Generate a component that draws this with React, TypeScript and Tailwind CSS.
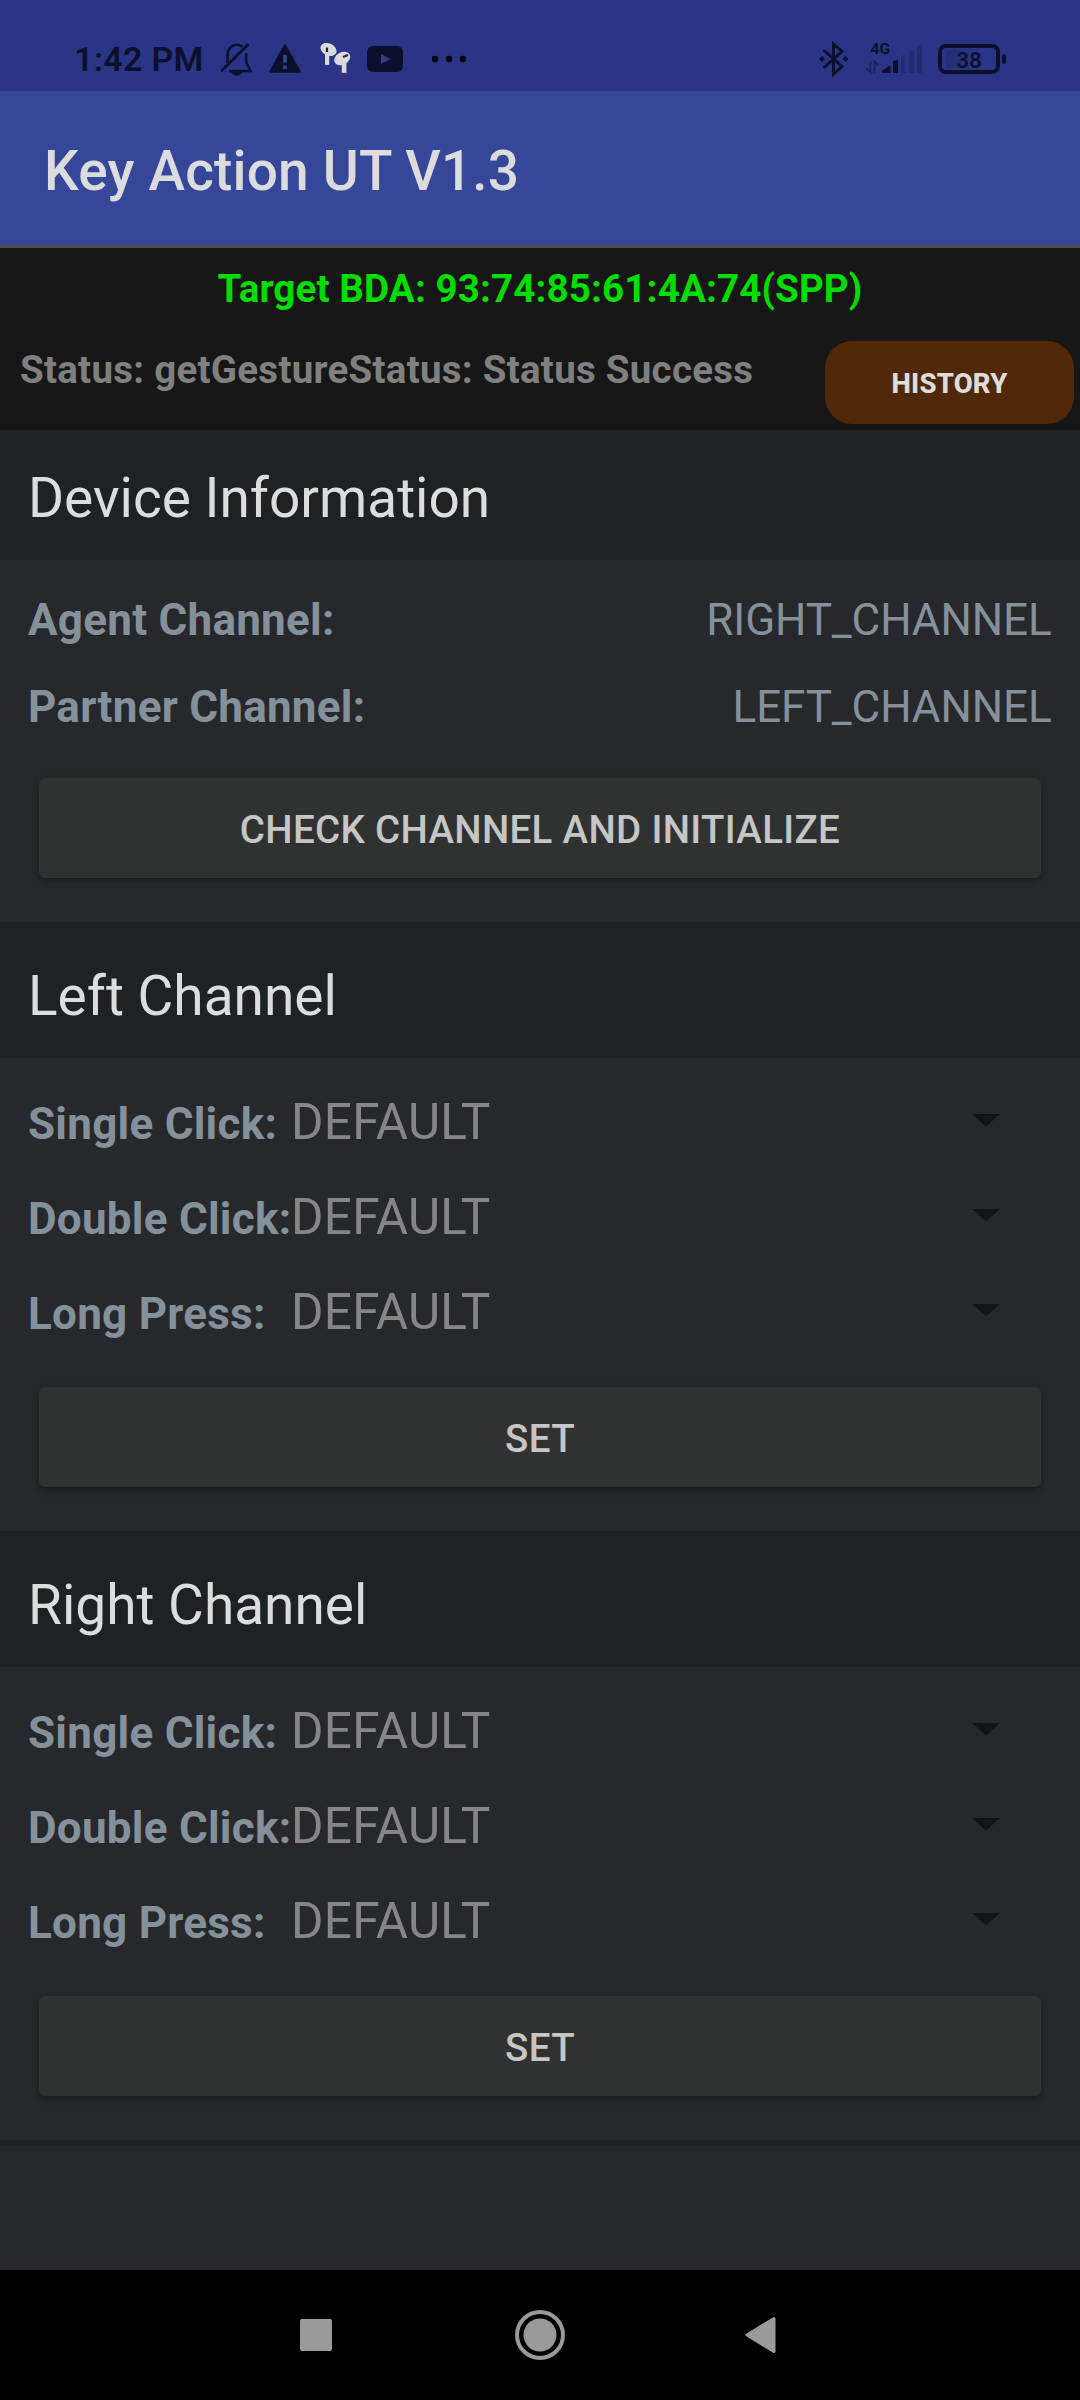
import { useState } from "react";

type Action = {
  label: string;
  value: string;
};

const DEFAULT_ACTIONS: Action[] = [
  { label: "Single Click:", value: "DEFAULT" },
  { label: "Double Click:", value: "DEFAULT" },
  { label: "Long Press:", value: "DEFAULT" },
];

function StatusBar() {
  return (
    <div className="h-[91px] bg-[#2a3588] text-[#0c102c] flex items-center justify-between pl-[74px] pr-[74px]">
      <div className="flex items-center h-full pt-[27px]">
        <div className="w-[146px] text-[34px] leading-[40px] font-semibold tracking-[0.3px] whitespace-nowrap">
          1:42 PM
        </div>
        {/* notification icons */}
        <svg width="250" height="40" viewBox="220 39 250 40" fill="none">
          <path
            d="M227.500 63V55.500C227.500 49 231.500 44.800 237 44.800C239 44.800 241 45.500 242.500 46.800M246.200 53V62.500L250.500 71H229"
            stroke="currentColor"
            strokeWidth="2.600"
          />
          <path d="M221 71.500L248.500 44" stroke="currentColor" strokeWidth="2.800" />
          <path d="M231 72H242C241 76.500 232.500 76.500 231 72Z" fill="currentColor" />
          <path
            d="M285 45.500L299.500 71.500H270.500Z"
            fill="currentColor"
            stroke="currentColor"
            strokeWidth="2.500"
            strokeLinejoin="round"
          />
          <path d="M285 55V62.500M285 65.500V69" stroke="#3a4596" strokeWidth="3.600" />
          <g fill="#d9dadd">
            <ellipse cx="328.500" cy="49.500" rx="8.500" ry="6" transform="rotate(25 328.500 49.500)" />
            <rect x="325" y="50" width="4.200" height="15" rx="1" />
            <ellipse cx="342.200" cy="58.500" rx="8.500" ry="6.200" transform="rotate(-28 342.200 58.500)" />
            <rect x="341.800" y="57" width="4.600" height="17" rx="1" />
          </g>
          <path d="M327 47.500V52M343 57L348 55" stroke="#26262e" strokeWidth="2.200" />
          <path d="M342 73.800H346" stroke="#6b2a3e" strokeWidth="2" />
          <rect x="367" y="46" width="36" height="26" rx="6" fill="currentColor" />
          <path d="M381 54V64L390.500 59Z" fill="#2f3b90" />
          <g fill="#04050c">
            <circle cx="435" cy="59" r="3.200" />
            <circle cx="449" cy="59" r="3.200" />
            <circle cx="463" cy="59" r="3.200" />
          </g>
        </svg>
      </div>
      <svg width="188" height="40" viewBox="818 39 188 40" fill="none" className="mt-[27px]">
        <path
          d="M823.500 50L842 66.500L833.500 74V44L842 51.500L823.500 68"
          stroke="currentColor"
          strokeWidth="3"
        />
        <path
          d="M822 56L825 59L822 62L819 59ZM845.500 56L848.500 59L845.500 62L842.500 59Z"
          fill="currentColor"
        />
        <text x="870.500" y="54" fill="currentColor" className="text-[15.500px] font-bold">
          4G
        </text>
        <path
          d="M870.500 61V72.500L866.500 68.500M874.500 73V61.500L878.500 65.500"
          stroke="#1c2560"
          strokeWidth="2"
        />
        <path d="M882 73V71L889 66H890.500V73ZM893 73V61L898 59.500V73Z" fill="currentColor" />
        <path
          d="M901 73V56L905.500 54.500V73ZM909 73V51L914 49V73ZM917 73V46L922 44V73Z"
          fill="#212b6e"
        />
        <rect x="945" y="50" width="17" height="18" rx="2" fill="#252f79" />
        <rect x="940" y="46" width="58" height="26" rx="6" stroke="currentColor" strokeWidth="4" />
        <rect x="1002" y="54" width="4" height="10" rx="2" fill="currentColor" />
        <text x="969" y="67.500" textAnchor="middle" fill="currentColor" className="text-[22.500px] font-semibold">
          38
        </text>
      </svg>
    </div>
  );
}

function SectionButton({ text }: { text: string }) {
  return (
    <button className="block mx-[39px] mt-[27px] w-[1002px] h-[100px] pt-[3px] rounded-[6px] bg-[#303231] text-[#c5c6c5] text-[38.5px] font-medium tracking-[0.32px] shadow-[0_3px_6px_rgba(0,0,0,0.3)]">
      {text}
    </button>
  );
}

function InfoRow({ label, value }: { label: string; value: string }) {
  return (
    <div className="h-[87px] pl-[28px] pr-[28.5px] flex items-center justify-between text-[44px] text-[#84919a]">
      <span className="font-bold tracking-[0.25px]">{label}</span>
      <span className="tracking-[-0.1px]">{value}</span>
    </div>
  );
}

function Channel({ title }: { title: string }) {
  const [actions] = useState<Action[]>(DEFAULT_ACTIONS);

  return (
    <section>
      <h2 className="h-[136px] pt-[12px] px-[28px] flex items-center bg-[#1e2224] text-[55px] text-[#dddddd]">
        {title}
      </h2>
      <div className="pt-[17px] pb-[44px]">
        {actions.map((action) => (
          <div
            key={action.label}
            className="h-[95px] pl-[28px] pr-[80px] flex items-baseline leading-[95px]"
          >
            <span className="w-[263px] shrink-0 whitespace-nowrap text-[44px] font-bold tracking-[0.25px] text-[#84919a]">
              {action.label}
            </span>
            <span className="grow text-[49.5px] tracking-[0.3px] text-[#868686]">{action.value}</span>
            <svg width="28" height="14" viewBox="0 0 28 14" className="self-center mb-[5px]">
              <path d="M0 1H28L14 13.500Z" fill="#131416" />
            </svg>
          </div>
        ))}
        <SectionButton text="SET" />
      </div>
    </section>
  );
}

export default function App() {
  return (
    <div className="w-[1080px] h-[2400px] flex flex-col overflow-hidden bg-[#27282c] font-[Roboto,sans-serif]">
      <StatusBar />
      <header className="h-[157px] pt-[6px] pl-[44px] flex items-center bg-[#364799] border-b-[3px] border-[#4b4f50] text-[55px] font-medium tracking-[0.18px] text-[#dcdcde]">
        Key Action UT V1.3
      </header>

      <div className="bg-[#171717] h-[182px] pt-[18px] text-[38.5px] leading-[45px] font-bold">
        <div className="text-center tracking-[0.16px] text-[#02dd02]">Target BDA: 93:74:85:61:4A:74(SPP)</div>
        <div className="mt-[30px] pl-[20px] pr-[6px] flex items-start justify-between">
          <span className="mt-[6px] tracking-[0.26px] text-[#808080]">
            Status: getGestureStatus: Status Success
          </span>
          <button className="w-[249px] h-[83px] pt-[2px] rounded-[27px] bg-[#512808] text-[27.5px] font-extrabold tracking-[0.2px] text-[#dddddd]">
            HISTORY
          </button>
        </div>
      </div>

      <section>
        <h2 className="h-[130px] pt-[6px] px-[28px] flex items-center bg-[#1e2224] text-[55px] text-[#dddddd]">
          Device Information
        </h2>
        <div className="pt-[16px] pb-[44px]">
          <InfoRow label="Agent Channel:" value="RIGHT_CHANNEL" />
          <InfoRow label="Partner Channel:" value="LEFT_CHANNEL" />
          <div className="pt-px">
            <SectionButton text="CHECK CHANNEL AND INITIALIZE" />
          </div>
        </div>
      </section>

      <Channel title="Left Channel" />
      <Channel title="Right Channel" />
      <div className="h-[6px] bg-[#202225]" />

      {/* system navigation */}
      <nav className="mt-auto h-[130px] pl-[300px] flex items-center bg-black text-[#9a9a9a]">
        <div className="size-[32px] rounded-[2px] bg-[#9a9a9a]" />
        <svg width="50" height="50" viewBox="0 0 50 50" className="ml-[183px]">
          <circle cx="25" cy="25" r="23" fill="none" stroke="currentColor" strokeWidth="4" />
          <circle cx="25" cy="25" r="16.500" fill="currentColor" />
        </svg>
        <svg width="32" height="38" viewBox="0 0 32 38" className="ml-[180px]">
          <path
            d="M2 19L29 2.500V35.500Z"
            fill="currentColor"
            stroke="currentColor"
            strokeWidth="3"
            strokeLinejoin="round"
          />
        </svg>
      </nav>
    </div>
  );
}
